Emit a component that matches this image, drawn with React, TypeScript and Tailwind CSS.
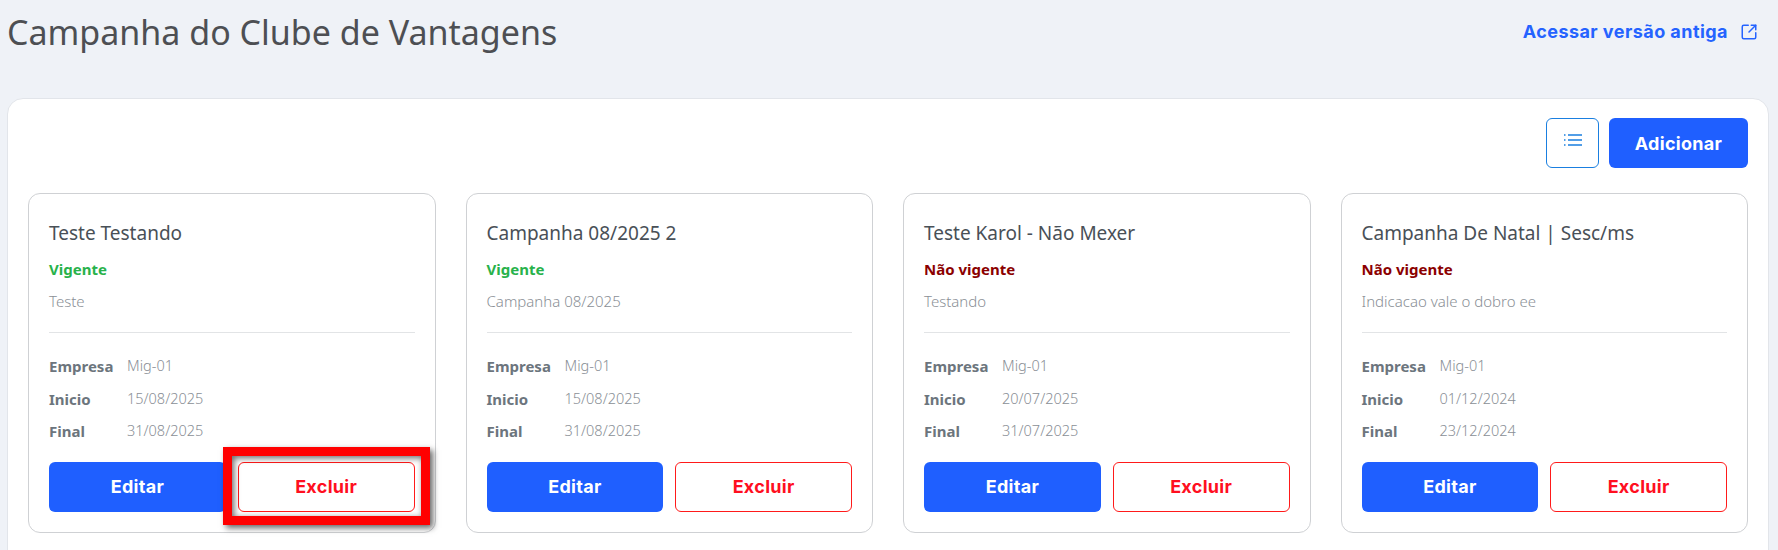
import { SquareArrowOutUpRight } from 'lucide-react';

const campanhas = [
  { nome: 'Teste Testando', vigente: true, descricao: 'Teste', inicio: '15/08/2025', final: '31/08/2025', destaque: true },
  { nome: 'Campanha 08/2025 2', vigente: true, descricao: 'Campanha 08/2025', inicio: '15/08/2025', final: '31/08/2025' },
  { nome: 'Teste Karol - Não Mexer', vigente: false, descricao: 'Testando', inicio: '20/07/2025', final: '31/07/2025' },
  { nome: 'Campanha De Natal | Sesc/ms', vigente: false, descricao: 'Indicacao vale o dobro ee', inicio: '01/12/2024', final: '23/12/2024' },
];

function ListIcon() {
  return (
    <svg width="18" height="12" viewBox="0 0 18 12" className="mb-[6px]" fill="none" stroke="currentColor" strokeWidth="1.5">
      <path d="M4 1h14M4 6h14M4 11h14" />
      <path d="M0 1h1.5M0 6h1.5M0 11h1.5" />
    </svg>
  );
}

function Info({ label, value }: { label: string; value: string }) {
  return (
    <div className="flex h-[32.5px] items-center">
      <span className="w-[78px] text-[15px] font-bold text-[#6c757d]">{label}</span>
      <span className="text-[14.5px] font-light text-[#8a8f96]">{value}</span>
    </div>
  );
}

function CampanhaCard({ nome, vigente, descricao, inicio, final, destaque }: (typeof campanhas)[number]) {
  return (
    <div className="flex h-[340px] flex-col rounded-xl border border-[#cfd1d4] bg-white px-5 pt-[25px]">
      <h2 className="h-7 text-[19px] leading-7 text-[#495057]">{nome}</h2>
      <p className={`mt-3 text-[15px] leading-5 font-bold ${vigente ? 'text-[#28b24b]' : 'text-[#8b0000]'}`}>
        {vigente ? 'Vigente' : 'Não vigente'}
      </p>
      <p className="mt-3 text-[15px] leading-5 font-light text-[#8a8f96]">{descricao}</p>
      <div className="mt-[21px] border-t border-[#e2e4e6]" />
      <div className="mt-[17px]">
        <Info label="Empresa" value="Mig-01" />
        <Info label="Inicio" value={inicio} />
        <Info label="Final" value={final} />
      </div>
      <div className="mt-[14px] grid grid-cols-2 gap-3">
        <button className="h-[50px] rounded-md bg-[#1f5fff] font-['Inter',sans-serif] text-[18px] font-bold tracking-[0.3px] text-white">
          Editar
        </button>
        <div className="relative">
          <button className="h-[50px] w-full rounded-md border border-[#ff1a1a] bg-white font-['Inter',sans-serif] text-[18px] font-bold tracking-[0.3px] text-[#ff0f1f]">
            Excluir
          </button>
          {destaque && (
            <div className="absolute -top-[15px] -right-[15px] -bottom-[13px] -left-[15px] border-[9px] border-[#ff0000] shadow-[3px_3px_6px_rgba(0,0,0,0.6),inset_2px_2px_6px_rgba(0,0,0,0.6)]" />
          )}
        </div>
      </div>
    </div>
  );
}

export default function App() {
  return (
    <div className="h-[550px] overflow-hidden bg-[#eff2f7] pr-[9px] pl-[7px] font-['Noto_Sans',sans-serif]">
      <div className="flex h-[98px] items-start justify-between pt-[9px] pr-[11px]">
        <h1 className="text-[34px] leading-[46px] text-[#4d4f53]">Campanha do Clube de Vantagens</h1>
        <a className="mt-[9px] flex items-center gap-3 font-['Inter',sans-serif] text-[18px] font-bold tracking-[0.45px] text-[#2563ff]">
          Acessar versão antiga
          <SquareArrowOutUpRight className="h-[18px] w-[18px]" strokeWidth={2} />
        </a>
      </div>
      <div className="h-[480px] rounded-2xl border border-[#e2e5ea] bg-white px-5 pt-[19px]">
        <div className="flex justify-end gap-[10px]">
          <button className="flex h-[50px] w-[53px] items-center justify-center rounded-md border border-[#1a7fe0] text-[#1a7fe0]">
            <ListIcon />
          </button>
          <button className="h-[50px] w-[139px] rounded-md bg-[#1f5fff] font-['Inter',sans-serif] text-[18px] font-bold tracking-[0.3px] text-white">
            Adicionar
          </button>
        </div>
        <div className="mt-[25px] grid grid-cols-4 gap-[30px]">
          {campanhas.map((campanha) => (
            <CampanhaCard key={campanha.nome} {...campanha} />
          ))}
        </div>
      </div>
    </div>
  );
}
